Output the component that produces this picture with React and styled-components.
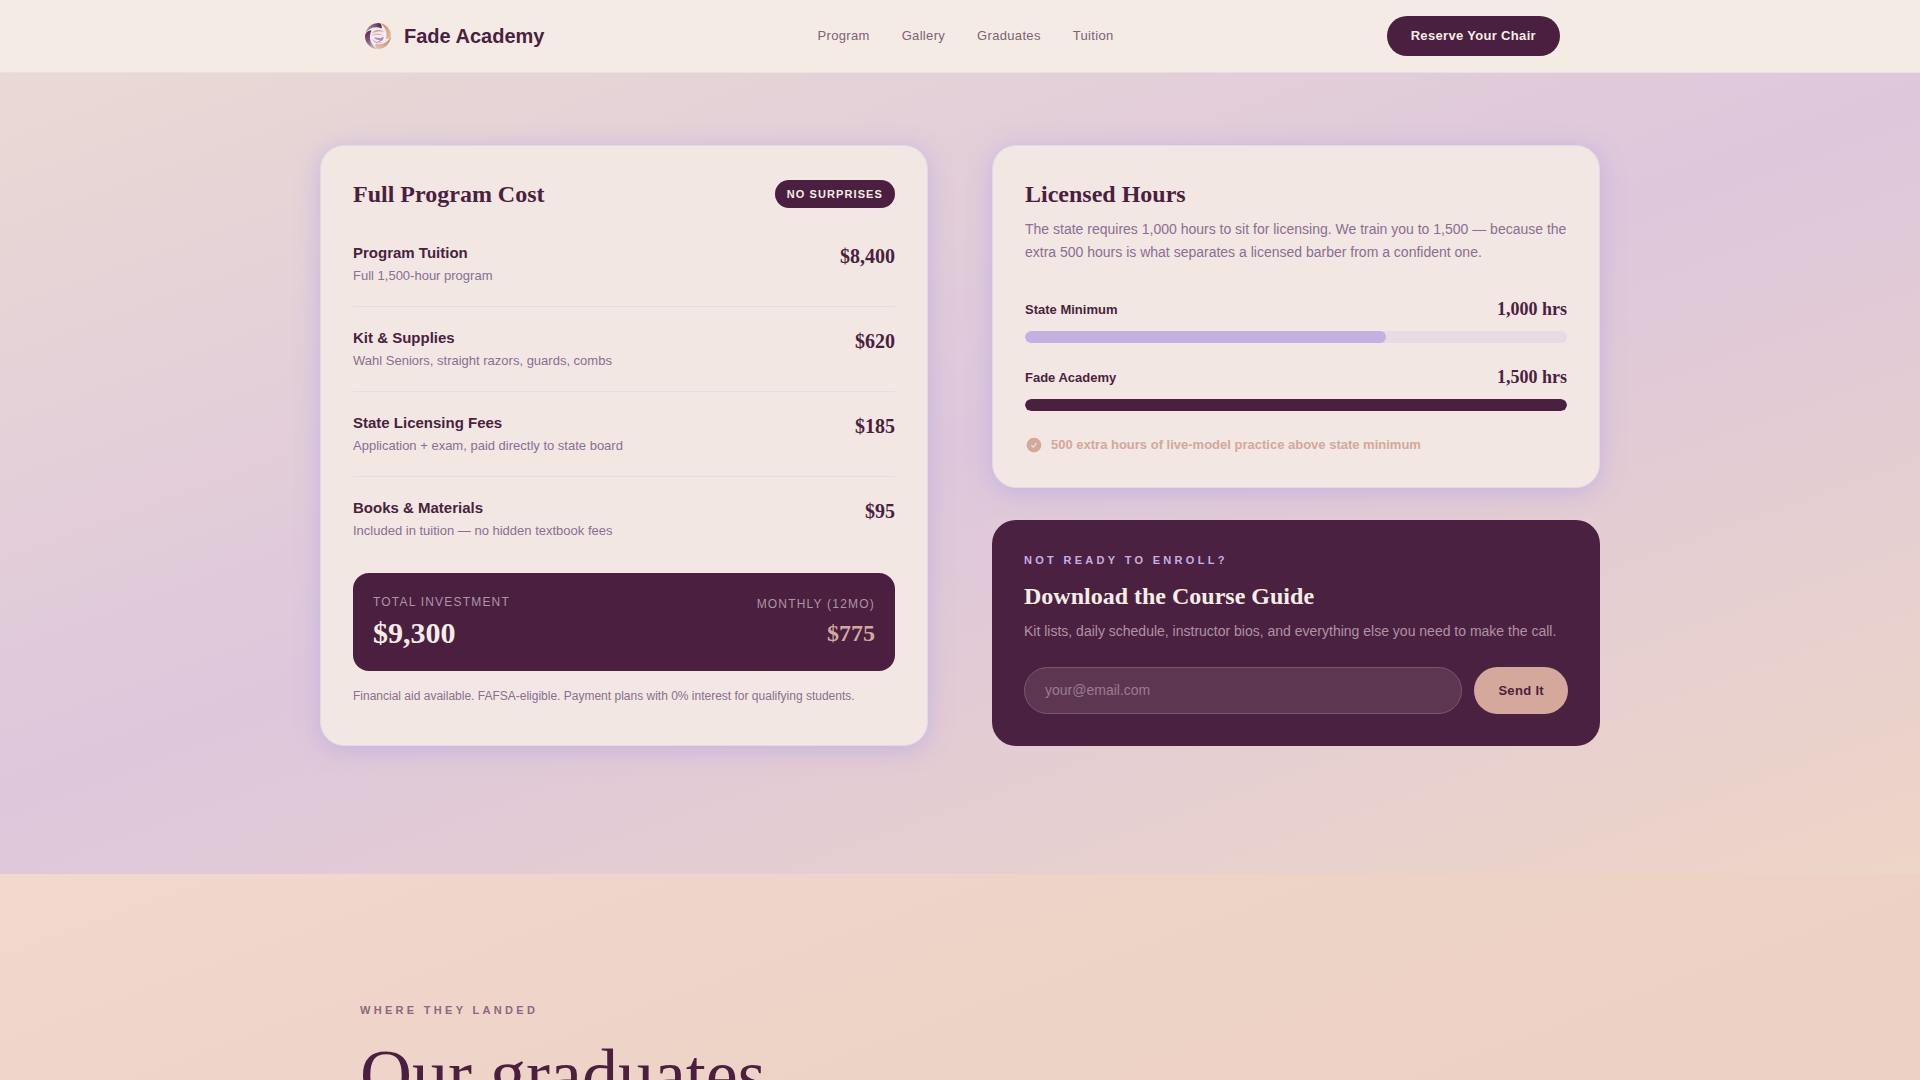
import React from "react";
import styled, { createGlobalStyle } from "styled-components";

const sans = '"Liberation Sans", Arial, sans-serif';
const serif = '"Liberation Serif", "Times New Roman", serif';
const plum = "#4a1f3f";
const cream = "#f5ede4";
const lavender = "#c3b1e1";
const blush = "#d4a89a";
const mauve = "#8a6e94";

const GlobalStyle = createGlobalStyle`
  * { box-sizing: border-box; margin: 0; }
  body { font-family: ${sans}; color: ${plum}; background: #eed4c8; overflow-x: hidden; }
  a { color: inherit; text-decoration: none; }
`;

const Header = styled.header`
  position: sticky;
  top: 0;
  z-index: 10;
  background: #f5ebe5;
  border-bottom: 1px solid #e9dfe4;
`;

const NavInner = styled.div`
  max-width: 1200px;
  margin: 0 auto;
  padding: 16px 0;
  display: flex;
  align-items: center;
  justify-content: space-between;
`;

const Brand = styled.a`
  display: flex;
  align-items: center;
  gap: 8px;
  font-size: 20px;
  font-weight: 700;
`;

const NavLinks = styled.nav`
  display: flex;
  gap: 32px;
  font-size: 13px;
  line-height: 20px;
  letter-spacing: 0.025em;
  color: #80607a;
`;

const Pill = styled.button`
  border: 0;
  border-radius: 24px;
  padding: 0 24px;
  min-height: 40px;
  font: 700 13px/20px ${sans};
  letter-spacing: 0.025em;
  white-space: nowrap;
  cursor: pointer;
  background: ${(p) => (p.$tone === "blush" ? blush : plum)};
  color: ${(p) => (p.$tone === "blush" ? plum : cream)};
`;

const Main = styled.main`
  margin-top: -56px;
`;

const TuitionSection = styled.section`
  padding: 128px 32px;
  background: linear-gradient(160deg, #ebdbd4 0%, #dec7db 50%, #edd5c7 100%);
`;

const CardGrid = styled.div`
  max-width: 1280px;
  margin: 0 auto;
  display: grid;
  grid-template-columns: 1fr 1fr;
  gap: 64px;
`;

const Column = styled.div`
  display: flex;
  flex-direction: column;
  gap: 32px;
`;

const Card = styled.article`
  padding: 32px;
  border: 1px solid #e6d9e3;
  border-radius: 24px;
  background: #f2e7e2;
  box-shadow: 0 4px 24px rgba(190, 172, 228, 0.8);
`;

const DarkCard = styled.article`
  padding: 32px;
  border-radius: 24px;
  background: #4b2141;
  color: ${cream};
`;

const CardHead = styled.div`
  display: flex;
  align-items: center;
  justify-content: space-between;
  margin-bottom: 12px;
`;

const CardTitle = styled.h2`
  font: 700 24px/32px ${serif};
`;

const Badge = styled.span`
  padding: 0 12px;
  border-radius: 14px;
  background: ${plum};
  color: ${cream};
  font-size: 11px;
  font-weight: 700;
  line-height: 28px;
  letter-spacing: 0.1em;
`;

const CostList = styled.ul`
  list-style: none;
  padding: 0;
`;

const CostRow = styled.li`
  display: flex;
  justify-content: space-between;
  padding: 20px 0;
  & + & { border-top: 1px solid #e8dbe4; }
`;

const CostName = styled.h3`
  font-size: 15px;
  line-height: 22px;
`;

const CostNote = styled.p`
  margin-top: 2px;
  font-size: 13px;
  line-height: 20px;
  color: ${mauve};
`;

const Price = styled.span`
  font: 700 20px/28px ${serif};
`;

const TotalBox = styled.div`
  margin-top: 12px;
  padding: 20px;
  display: flex;
  align-items: center;
  justify-content: space-between;
  border-radius: 16px;
  background: ${plum};
`;

const TotalPart = styled.div`
  text-align: ${(p) => (p.$end ? "right" : "left")};
`;

const TotalLabel = styled.p`
  font-size: 12px;
  line-height: 18px;
  letter-spacing: 0.1em;
  color: #b094a6;
`;

const TotalValue = styled.p`
  margin-top: 4px;
  font: 700 ${(p) => (p.$small ? "24px/32px" : "30px/36px")} ${serif};
  color: ${(p) => (p.$small ? blush : cream)};
`;

const FinePrint = styled.p`
  margin-top: 16px;
  font-size: 12px;
  line-height: 18px;
  color: ${mauve};
`;

const Copy = styled.p`
  margin-top: 8px;
  font-size: 14px;
  line-height: 23px;
  color: ${(p) => (p.$onDark ? "#ae93a5" : mauve)};
`;

const Meters = styled.div`
  margin-top: 32px;
  display: grid;
  gap: 21px;
`;

const MeterHead = styled.div`
  display: flex;
  align-items: center;
  justify-content: space-between;
  margin-bottom: 8px;
  font-size: 13px;
  font-weight: 700;
`;

const MeterValue = styled.span`
  font: 700 18px/27px ${serif};
`;

const Track = styled.div`
  height: 12px;
  border-radius: 6px;
  overflow: hidden;
  background: #e7dbe4;
`;

const Fill = styled.div`
  height: 100%;
  border-radius: 6px;
  background: ${(p) => (p.$strong ? plum : lavender)};
`;

const Highlight = styled.p`
  margin-top: 24px;
  display: flex;
  align-items: center;
  gap: 8px;
  font-size: 13px;
  font-weight: 700;
  line-height: 20px;
  color: ${blush};
`;

const Eyebrow = styled.p`
  font-size: 11px;
  font-weight: 700;
  line-height: 17px;
  letter-spacing: 0.3em;
  text-transform: uppercase;
  color: ${(p) => (p.$onDark ? lavender : "#8c6880")};
`;

const GuideTitle = styled(CardTitle)`
  margin-top: 12px;
  line-height: 31px;
`;

const GuideForm = styled.form`
  margin-top: 24px;
  display: flex;
  gap: 12px;
`;

const EmailInput = styled.input`
  flex: 1;
  min-width: 0;
  padding: 14px 20px;
  border: 1px solid #7a5870;
  border-radius: 24px;
  background: #5d3752;
  color: ${cream};
  font: 14px/17px ${sans};
  outline: none;
  &::placeholder { color: #9a7b90; opacity: 1; }
`;

const GraduatesSection = styled.section`
  padding: 128px 32px;
  background: linear-gradient(160deg, #f2d8cd 0%, #edd3c6 50%, #ebcfc2 100%);
`;

const GraduatesInner = styled.div`
  max-width: 1200px;
  margin: 0 auto;
`;

const DisplayTitle = styled.h2`
  margin-top: 16px;
  font: 400 72px/81px ${serif};
`;

function LogoMark() {
  return (
    <svg width="36" height="36" viewBox="0 0 36 36" aria-hidden="true">
      <defs>
        <linearGradient id="lm-plum" x1="0" y1="0" x2="1" y2="0">
          <stop offset="0" stopColor="#b48fae" />
          <stop offset="1" stopColor="#54264a" />
        </linearGradient>
        <linearGradient id="lm-plum-low" x1="0" y1="0" x2="0.4" y2="1">
          <stop offset="0" stopColor="#54264a" />
          <stop offset="0.5" stopColor="#7d4d72" />
          <stop offset="1" stopColor="#c9a5b8" />
        </linearGradient>
        <linearGradient id="lm-copper" x1="0" y1="0" x2="1" y2="1">
          <stop offset="0" stopColor="#c58d70" />
          <stop offset="1" stopColor="#e6bda0" />
        </linearGradient>
        <linearGradient id="lm-copper-low" x1="1" y1="0" x2="0" y2="1">
          <stop offset="0" stopColor="#b97c62" />
          <stop offset="1" stopColor="#ebc6ae" />
        </linearGradient>
      </defs>
      <circle cx="18" cy="18" r="9" fill="#f3eaf3" />
      <path d="M5.500 15C7.500 8.500 13 4.500 20 5.200C21.500 6.500 22.200 8.500 21.500 10.500C16 8 9.500 9.500 5.500 15Z" fill="url(#lm-plum)" />
      <path d="M20.500 5.200C26.500 6.300 30.800 11.500 31 17.500C30 20.500 28 21.500 26 20.500C27.500 14.500 25.500 9 20.500 5.200Z" fill="url(#lm-copper)" />
      <path d="M31 18.500C30.300 25.500 25 31 18 31C15.500 30 14.500 27.500 16 25.800C22 27.500 27.500 25 31 18.500Z" fill="url(#lm-copper-low)" />
      <path d="M17 31C10 30.300 5 25 5 18C5.500 14.500 8 12.500 11.500 12.500C8 19.500 10.500 26.500 17 31Z" fill="url(#lm-plum-low)" />
      <path d="M12 15.500C14.500 11.500 20 10.500 24 14C20 13 16 13.500 12 15.500Z" fill="#d5a48d" />
      <path d="M11.500 18C15 14.500 20 15 23 17.500C19 16.500 15 16.500 11.500 18Z" fill="#dcb19b" />
      <path d="M14 20C17 18.500 19 22 23.500 18.500C24 22 21 24.500 17.500 23.500C19 23 20 22.500 20.500 21.800C18 22.500 16 21.500 14 20Z" fill="#a98bbd" />
      <path d="M12 21C13.500 24.500 17.500 26.500 22.500 24.500C19 25 15 24 12 21Z" fill="#b89ccb" />
    </svg>
  );
}

function CheckCircle() {
  return (
    <svg width="18" height="18" viewBox="0 0 24 24" fill="currentColor" aria-hidden="true">
      <path
        fillRule="evenodd"
        d="M2.25 12c0-5.385 4.365-9.75 9.75-9.75s9.75 4.365 9.75 9.75-4.365 9.75-9.75 9.75S2.25 17.385 2.25 12zm13.36-1.814a.75.75 0 10-1.22-.872l-3.236 4.53L9.53 12.22a.75.75 0 00-1.06 1.06l2.25 2.25a.75.75 0 001.14-.094l3.75-5.25z"
      />
    </svg>
  );
}

const costs = [
  { name: "Program Tuition", note: "Full 1,500-hour program", price: "$8,400" },
  { name: "Kit & Supplies", note: "Wahl Seniors, straight razors, guards, combs", price: "$620" },
  { name: "State Licensing Fees", note: "Application + exam, paid directly to state board", price: "$185" },
  { name: "Books & Materials", note: "Included in tuition — no hidden textbook fees", price: "$95" },
];

const hours = [
  { name: "State Minimum", value: 1000, label: "1,000 hrs" },
  { name: "Fade Academy", value: 1500, label: "1,500 hrs", strong: true },
];

export default function App() {
  return (
    <>
      <GlobalStyle />
      <Header>
        <NavInner>
          <Brand href="#top">
            <LogoMark />
            Fade Academy
          </Brand>
          <NavLinks>
            <a href="#program">Program</a>
            <a href="#gallery">Gallery</a>
            <a href="#graduates">Graduates</a>
            <a href="#tuition">Tuition</a>
          </NavLinks>
          <Pill type="button">Reserve Your Chair</Pill>
        </NavInner>
      </Header>
      <Main>
        <TuitionSection id="tuition">
          <CardGrid>
            <Card>
              <CardHead>
                <CardTitle>Full Program Cost</CardTitle>
                <Badge>NO SURPRISES</Badge>
              </CardHead>
              <CostList>
                {costs.map((c) => (
                  <CostRow key={c.name}>
                    <div>
                      <CostName>{c.name}</CostName>
                      <CostNote>{c.note}</CostNote>
                    </div>
                    <Price>{c.price}</Price>
                  </CostRow>
                ))}
              </CostList>
              <TotalBox>
                <TotalPart>
                  <TotalLabel>TOTAL INVESTMENT</TotalLabel>
                  <TotalValue>$9,300</TotalValue>
                </TotalPart>
                <TotalPart $end>
                  <TotalLabel>MONTHLY (12MO)</TotalLabel>
                  <TotalValue $small>$775</TotalValue>
                </TotalPart>
              </TotalBox>
              <FinePrint>
                Financial aid available. FAFSA-eligible. Payment plans with 0% interest for qualifying students.
              </FinePrint>
            </Card>
            <Column>
              <Card>
                <CardTitle>Licensed Hours</CardTitle>
                <Copy>
                  The state requires 1,000 hours to sit for licensing. We train you to 1,500 — because the extra 500
                  hours is what separates a licensed barber from a confident one.
                </Copy>
                <Meters>
                  {hours.map((h) => (
                    <div key={h.name}>
                      <MeterHead>
                        <span>{h.name}</span>
                        <MeterValue>{h.label}</MeterValue>
                      </MeterHead>
                      <Track>
                        <Fill $strong={h.strong} style={{ width: `${(h.value / 1500) * 100}%` }} />
                      </Track>
                    </div>
                  ))}
                </Meters>
                <Highlight>
                  <CheckCircle />
                  500 extra hours of live-model practice above state minimum
                </Highlight>
              </Card>
              <DarkCard>
                <Eyebrow $onDark>Not ready to enroll?</Eyebrow>
                <GuideTitle>Download the Course Guide</GuideTitle>
                <Copy $onDark>
                  Kit lists, daily schedule, instructor bios, and everything else you need to make the call.
                </Copy>
                <GuideForm onSubmit={(e) => e.preventDefault()}>
                  <EmailInput type="email" placeholder="your@email.com" aria-label="Email address" />
                  <Pill type="submit" $tone="blush">Send It</Pill>
                </GuideForm>
              </DarkCard>
            </Column>
          </CardGrid>
        </TuitionSection>
        <GraduatesSection id="graduates">
          <GraduatesInner>
            <Eyebrow>Where they landed</Eyebrow>
            <DisplayTitle>Our graduates</DisplayTitle>
          </GraduatesInner>
        </GraduatesSection>
      </Main>
    </>
  );
}
